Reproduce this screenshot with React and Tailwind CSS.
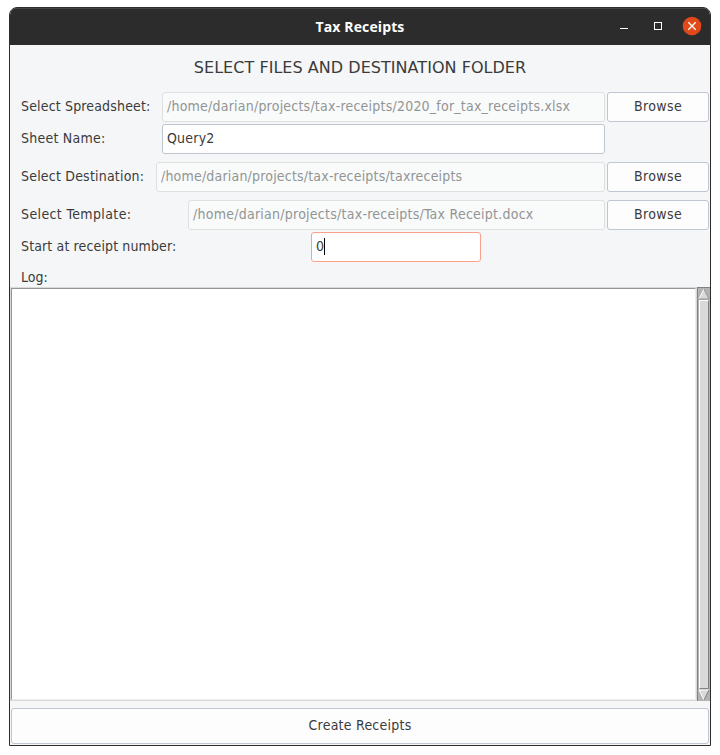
function Label({ className = 'tracking-[0.14px]', children }) {
  return <span className={`shrink-0 whitespace-pre leading-[28px] ${className}`}>{children}</span>;
}

function Field({ value, className = '', textClass = '' }) {
  return (
    <div className={`h-[30px] shrink-0 whitespace-pre rounded-[3px] border pl-1 leading-[26px] ${className}`}>
      <span className={textClass}>{value}</span>
    </div>
  );
}

function Browse() {
  return (
    <button className="ml-[2px] h-[30px] w-[102px] shrink-0 rounded-[3px] border border-[#c0c6cf] bg-[#fdfdfe] pb-[3px] leading-[24px] tracking-[0.4px]">
      Browse
    </button>
  );
}

const disabled = 'border-[#dde0e0] bg-[#f9fafa] text-[#929595]';

export default function App() {
  return (
    <div className="h-[755px] w-[720px] overflow-hidden bg-white pl-[9px] pt-[7px] font-['DejaVu_Sans_Condensed','DejaVu_Sans',sans-serif] text-[14px] text-[#3b3b3b]">
      <div className="flex h-[739px] w-[702px] flex-col overflow-hidden rounded-t-[8px] border border-[#2d2d2d] bg-[#f5f6f7]">
        <header className="grid h-[37px] shrink-0 grid-cols-[1fr_auto_1fr] items-center border-t border-[#444] bg-[#2c2c2c]">
          <span />
          <h1 className="font-['Open_Sans',sans-serif] text-[14px] font-bold leading-[20px] tracking-[0.12px] text-white">Tax Receipts</h1>
          <svg className="justify-self-end" width="102" height="36" viewBox="0 0 102 36" fill="none">
            <path d="M12 19.5h8" stroke="#fff" />
            <rect x="46.5" y="13.5" width="7" height="7" stroke="#fff" />
            <circle cx="84" cy="17" r="9.3" fill="#e2491a" />
            <path d="M80.3 13.3l7.4 7.4M87.7 13.3l-7.4 7.4" stroke="#fff" strokeWidth="1.3" />
          </svg>
        </header>

        <h2 className="mt-[12px] h-[22px] shrink-0 whitespace-nowrap text-center font-['DejaVu_Sans',sans-serif] text-[16px] leading-[22px] tracking-[0.04px]">
          SELECT FILES AND DESTINATION FOLDER
        </h2>

        <div className="mt-[13px] flex h-[30px] shrink-0 pl-[11px]">
          <Label className="w-[141px] tracking-[0.16px]">Select Spreadsheet:</Label>
          <Field className={`w-[443px] tracking-[0.22px] ${disabled}`} value="/home/darian/projects/tax-receipts/2020_for_tax_receipts.xlsx" />
          <Browse />
        </div>
        <div className="mt-[2px] flex h-[30px] shrink-0 pl-[11px]">
          <Label className="w-[141px] tracking-[0.24px]">Sheet Name:</Label>
          <Field className="w-[443px] border-[#c0c6cf] bg-white tracking-[0.21px]" value="Query2" />
        </div>
        <div className="mt-[8px] flex h-[30px] shrink-0 pl-[11px]">
          <Label className="w-[135px] tracking-[0.2px]">Select Destination:</Label>
          <Field className={`w-[449px] tracking-[0.19px] ${disabled}`} value="/home/darian/projects/tax-receipts/taxreceipts" />
          <Browse />
        </div>
        <div className="mt-[8px] flex h-[30px] shrink-0 pl-[11px]">
          <Label className="w-[167px] tracking-[0.38px]">Select Template:</Label>
          <Field className={`w-[417px] tracking-[0.25px] ${disabled}`} value="/home/darian/projects/tax-receipts/Tax Receipt.docx" />
          <Browse />
        </div>
        <div className="mt-[2px] flex h-[30px] shrink-0 pl-[11px]">
          <Label className="w-[290px] tracking-[0.13px]">Start at receipt number:</Label>
          <Field className="w-[170px] border-[#faa08d] bg-white tracking-[0.21px]" textClass="inline-block h-[17px] border-r border-black leading-[17px]" value="0" />
        </div>
        <div className="h-[25px] shrink-0 pl-[11px]">
          <Label className="leading-[30px]">Log:</Label>
        </div>

        <div className="flex h-[414px] shrink-0">
          <div className="w-[687px] border border-[#d9d9d9]">
            <div className="h-full border border-b-[#ececec] border-l-[#969696] border-r-[#ececec] border-t-[#969696] bg-white" />
          </div>
          <div className="flex w-[13px] flex-col border-l border-t border-[#828282] bg-[#b3b3b3]">
            <svg width="12" height="12" viewBox="0 0 12 12">
              <path d="M6 1L11 11H1z" fill="#d9d9d9" />
              <path d="M6 1L1 11" stroke="#fff" fill="none" />
              <path d="M6 1L11 11H1" stroke="#969696" fill="none" />
            </svg>
            <div className="ml-px w-[10px] flex-1 border border-b-[#828282] border-l-white border-r-[#828282] border-t-white bg-[#d9d9d9]" />
            <svg width="12" height="12" viewBox="0 0 12 12">
              <path d="M1 1H11L6 11z" fill="#d9d9d9" />
              <path d="M11 1H1L6 11" stroke="#fff" fill="none" />
              <path d="M11 1L6 11" stroke="#828282" fill="none" />
            </svg>
          </div>
        </div>

        <button className="ml-px mt-[7px] h-[36px] w-[698px] shrink-0 rounded-[3px] border border-[#c0c6cf] bg-[#fdfdfe] pb-[2px] tracking-[0.24px]">
          Create Receipts
        </button>
      </div>
    </div>
  );
}
